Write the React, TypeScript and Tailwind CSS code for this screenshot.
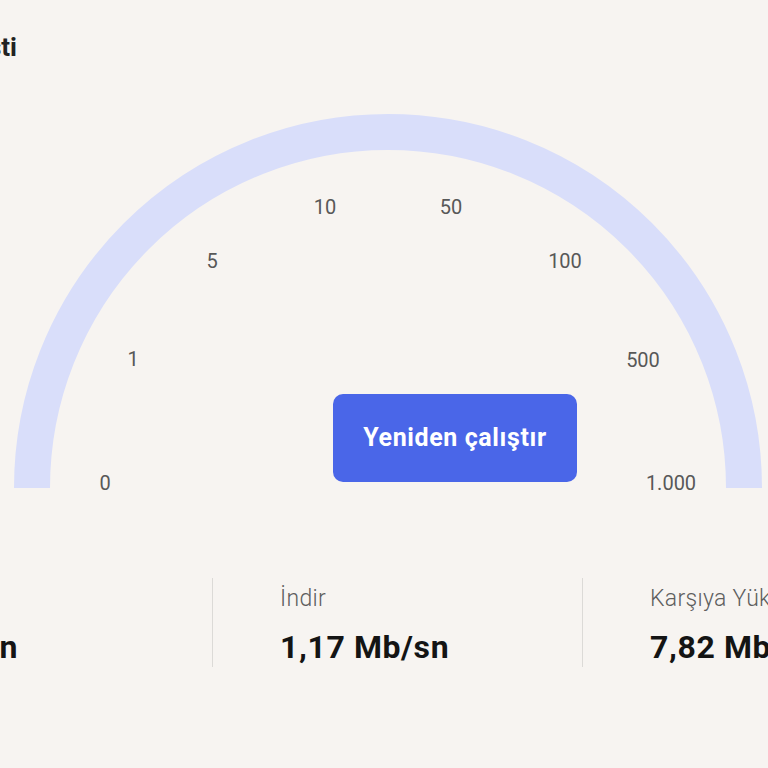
import React from 'react';

const ticks = [
  { label: '0', x: 105, y: 389 },
  { label: '1', x: 133, y: 265 },
  { label: '5', x: 212, y: 167 },
  { label: '10', x: 325, y: 113 },
  { label: '50', x: 451, y: 113 },
  { label: '100', x: 565, y: 167 },
  { label: '500', x: 643, y: 266 },
  { label: '1.000', x: 671, y: 389 },
];

function Stat({ label, value, first }: { label: string; value: string; first?: boolean }) {
  return (
    <div
      className={
        first
          ? 'w-[370px] h-[89px] shrink-0 flex justify-end pr-[194px]'
          : 'w-[370px] h-[89px] shrink-0 border-l border-[#dcdad7] pl-[67px]'
      }
    >
      <div>
        <div className="text-[23px] leading-[28px] mt-[7px] font-light text-[#5e5e5e] tracking-[0.3px] whitespace-nowrap">
          {label}
        </div>
        <div className="text-[32px] leading-[38px] mt-[15px] font-bold text-[#141414] tracking-[0.6px] whitespace-nowrap">
          {value}
        </div>
      </div>
    </div>
  );
}

export default function App() {
  return (
    <div className="w-[768px] h-[768px] overflow-hidden bg-[#f7f4f1] font-['Roboto',sans-serif]">
      <div className="h-[94px] flex">
        <div className="w-[200px] ml-[-183px] shrink-0 text-right pt-[31px] text-[26px] leading-[32px] font-bold text-[#222]">
          Hız Testi
        </div>
      </div>

      <div className="relative h-[400px]">
        <svg width="768" height="400" viewBox="0 0 768 400" className="block">
          <path d="M 32 394 A 356 356 0 0 1 744 394" fill="none" stroke="#d9defa" strokeWidth="36" />
          {ticks.map((t) => (
            <text
              key={t.label}
              x={t.x}
              y={t.y}
              textAnchor="middle"
              dominantBaseline="central"
              fontFamily="Roboto, sans-serif"
              fontSize="20"
              fill="#585858"
            >
              {t.label}
            </text>
          ))}
        </svg>
        <button className="absolute left-[333px] top-[300px] w-[244px] h-[88px] rounded-[10px] bg-[#4a66e8] text-white text-[25px] font-bold tracking-[0.6px]">
          Yeniden çalıştır
        </button>
      </div>

      <div className="flex mt-[84px] ml-[-158px]">
        <Stat first label="Ping" value="7 Mb/sn" />
        <Stat label="İndir" value="1,17 Mb/sn" />
        <Stat label="Karşıya Yükle" value="7,82 Mb/sn" />
      </div>
    </div>
  );
}
